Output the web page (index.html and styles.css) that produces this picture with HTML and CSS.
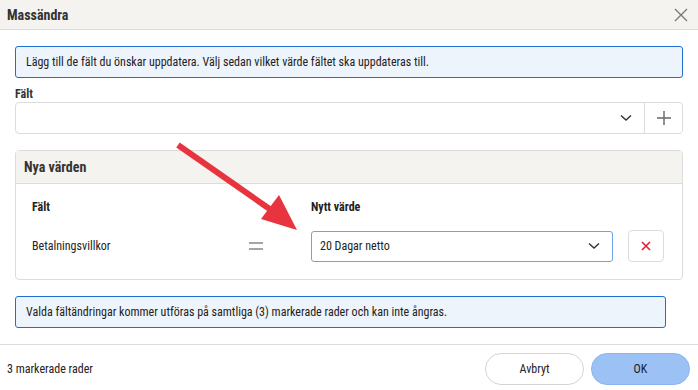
FILE: index.html
```html
<!DOCTYPE html>
<html lang="sv">
<head>
    <meta charset="UTF-8">
    <title>Massändra</title>
    <link rel="stylesheet" href="styles.css">
</head>
<body>
    <div class="dialog">
        <div class="dialog-header">
            <h1>Massändra</h1>
            <span class="close">
                <svg width="14" height="14" viewBox="0 0 14 14"><path d="M1 1L13 13M13 1L1 13" stroke="#777" stroke-width="1.3" fill="none"/></svg>
            </span>
        </div>

        <div class="dialog-body">
            <div class="info">Lägg till de fält du önskar uppdatera. Välj sedan vilket värde fältet ska uppdateras till.</div>

            <label class="field-label">Fält</label>
            <div class="select-group">
                <div class="select-box">
                    <span></span>
                    <svg width="12" height="8" viewBox="0 0 12 8"><path d="M1 1.5L6 6L11 1.5" stroke="#333" stroke-width="1.4" fill="none"/></svg>
                </div>
                <button class="add-btn">
                    <svg width="14" height="14" viewBox="0 0 14 14"><path d="M7 0V14M0 7H14" stroke="#666" stroke-width="1.4"/></svg>
                </button>
            </div>

            <div class="panel">
                <div class="panel-header">Nya värden</div>
                <div class="panel-body">
                    <div class="row head">
                        <div class="col-field">Fält</div>
                        <div class="col-eq"></div>
                        <div class="col-value">Nytt värde</div>
                    </div>
                    <div class="row">
                        <div class="col-field">Betalningsvillkor</div>
                        <div class="col-eq">
                            <svg width="14" height="8" viewBox="0 0 14 8"><path d="M0 1H14M0 7H14" stroke="#888" stroke-width="1.5"/></svg>
                        </div>
                        <div class="col-value">
                            <div class="select-box active">
                                <span>20 Dagar netto</span>
                                <svg width="12" height="8" viewBox="0 0 12 8"><path d="M1 1.5L6 6L11 1.5" stroke="#333" stroke-width="1.4" fill="none"/></svg>
                            </div>
                            <button class="remove-btn">
                                <svg width="10" height="10" viewBox="0 0 10 10"><path d="M1 1L9 9M9 1L1 9" stroke="#e0202e" stroke-width="1.6"/></svg>
                            </button>
                        </div>
                    </div>
                </div>
            </div>

            <div class="info short">Valda fältändringar kommer utföras på samtliga (3) markerade rader och kan inte ångras.</div>
        </div>

        <div class="dialog-footer">
            <span class="count">3 markerade rader</span>
            <div class="actions">
                <button class="btn">Avbryt</button>
                <button class="btn primary">OK</button>
            </div>
        </div>

        <svg class="arrow" width="698" height="390" viewBox="0 0 698 390">
            <line x1="178" y1="145" x2="274" y2="212" stroke="#e8343f" stroke-width="6" stroke-linecap="butt"/>
            <polygon points="297,230 261,219 279,195" fill="#e8343f"/>
        </svg>
    </div>
</body>
</html>
```

FILE: styles.css
```css
* {
    margin: 0;
    padding: 0;
    box-sizing: border-box;
}

body {
    font-family: "Roboto Condensed", "Liberation Sans Narrow", "DejaVu Sans Condensed", sans-serif;
    font-size: 12px;
    color: #222;
    background: #fff;
}

.dialog {
    position: relative;
    width: 698px;
    height: 390px;
    overflow: hidden;
}

.dialog-header {
    height: 30px;
    display: flex;
    align-items: center;
    justify-content: space-between;
    padding: 0 10px 0 7px;
    background-color: #f4f3f0;
    border-bottom: 1px solid #dedcd8;
}

.dialog-header h1 {
    font-size: 14px;
    font-weight: bold;
    color: #333;
}

.close {
    display: flex;
}

.dialog-body {
    padding: 16px 15px 16px 15px;
}

.info {
    background-color: #eef4fb;
    border: 1px solid #1f6fd0;
    border-radius: 3px;
    padding: 8px 10px;
    height: 32px;
    line-height: 15px;
}

.info.short {
    width: 651px;
    margin-top: 16px;
}

.field-label {
    display: block;
    font-weight: bold;
    margin: 9px 0 1px;
    color: #333;
}

.select-group {
    display: flex;
    height: 32px;
    border: 1px solid #dcdcdc;
    border-radius: 4px;
}

.select-box {
    flex: 1;
    display: flex;
    align-items: center;
    justify-content: space-between;
    padding: 0 12px 0 8px;
}

.add-btn {
    width: 38px;
    border: none;
    border-left: 1px solid #dcdcdc;
    background: none;
    display: flex;
    align-items: center;
    justify-content: center;
}

.panel {
    margin-top: 16px;
    border: 1px solid #dcdcdc;
    border-radius: 4px;
    height: 130px;
}

.panel-header {
    height: 33px;
    padding: 0 8px;
    display: flex;
    align-items: center;
    font-size: 14px;
    font-weight: bold;
    color: #333;
    background-color: #f4f3f0;
    border-bottom: 1px solid #dcdcdc;
}

.panel-body {
    padding: 14px 16px 0;
}

.row {
    display: flex;
    align-items: center;
}

.row.head {
    font-weight: bold;
    height: 18px;
    margin-bottom: 14px;
}

.col-field {
    width: 200px;
    flex-shrink: 0;
}

.col-eq {
    width: 79px;
    flex-shrink: 0;
    display: flex;
    padding-left: 17px;
}

.col-value {
    flex: 1;
    display: flex;
    align-items: center;
}

.select-box.active {
    flex: none;
    width: 302px;
    height: 31px;
    border: 1px solid #6ea3ea;
    border-radius: 3px;
}

.remove-btn {
    width: 36px;
    height: 32px;
    margin-left: 15px;
    border: 1px solid #dcdcdc;
    border-radius: 4px;
    background: #fff;
    display: flex;
    align-items: center;
    justify-content: center;
}

.dialog-footer {
    position: absolute;
    left: 0;
    right: 0;
    bottom: 0;
    height: 46px;
    border-top: 1px solid #dcdcdc;
    display: flex;
    align-items: center;
    justify-content: space-between;
    padding: 3px 8px 0 7px;
}

.actions {
    display: flex;
    gap: 7px;
}

.btn {
    width: 99px;
    height: 32px;
    border-radius: 16px;
    border: 1px solid #d4d4d4;
    background: #fff;
    font-family: inherit;
    font-size: 12px;
    color: #222;
}

.btn.primary {
    background-color: #9cc2f5;
    border-color: #8ab6f0;
}

.arrow {
    position: absolute;
    left: 0;
    top: 0;
    pointer-events: none;
}
```
